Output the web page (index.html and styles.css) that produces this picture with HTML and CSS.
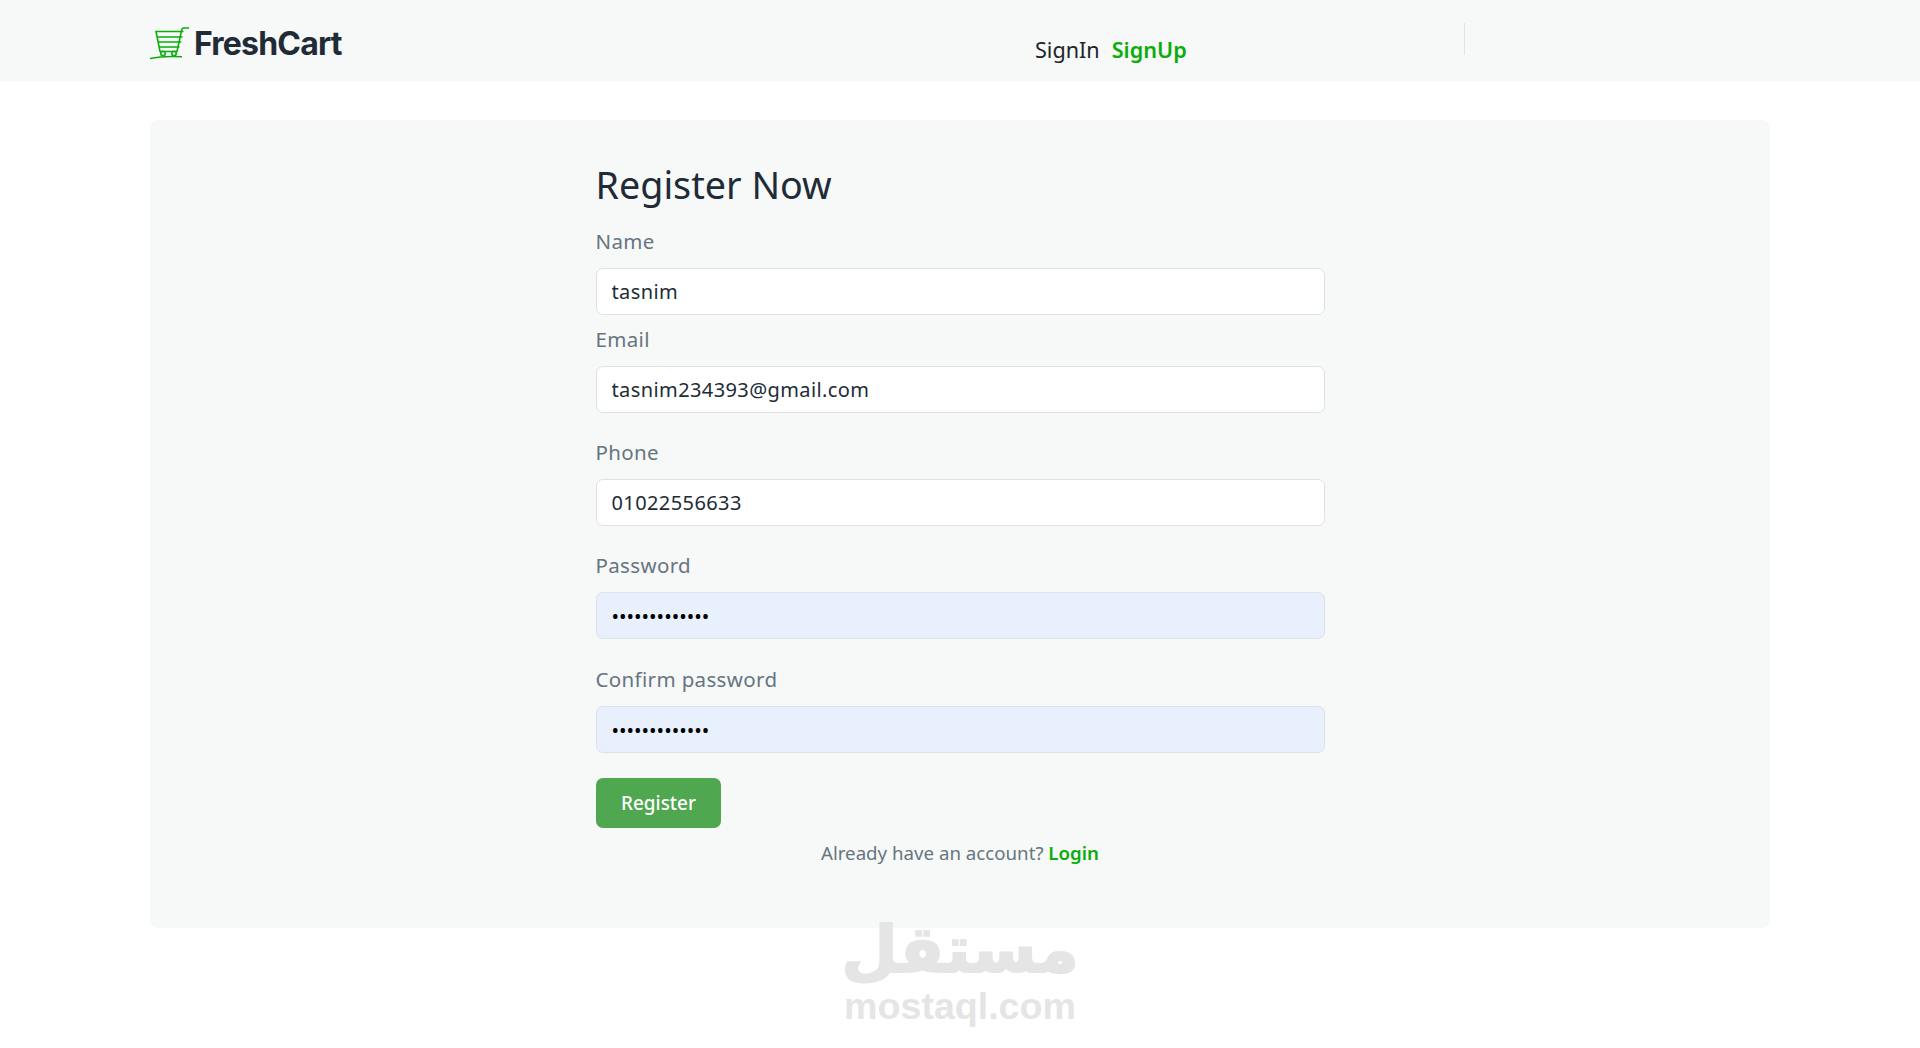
FILE: index.html
```html
<!DOCTYPE html>
<html lang="en">
<head>
<meta charset="utf-8">
<title>FreshCart</title>
<link rel="stylesheet" href="styles.css">
</head>
<body>
<header class="navbar">
  <a class="brand" href="#">
    <svg class="brand-icon" viewBox="0 0 40 34" width="40" height="34" fill="none" stroke="#0aad0a" stroke-width="1.6" aria-hidden="true">
      <path d="M39 2h-5.500c-1 0-1.400.5-1.700 1.400L27 25.500H10L6 5.500h27.500M7 11h25.500M8 16h23.200M9 21h20.500"/>
      <circle cx="13" cy="27.500" r="2.200"/>
      <circle cx="24" cy="27.500" r="2.200"/>
      <path d="M0 32.500c9-2 21-2.300 32-1.800" stroke-width="1.600"/>
    </svg>
    <span class="brand-name">FreshCart</span>
  </a>
  <nav class="nav-links">
    <a class="nav-link" href="#">SignIn</a>
    <a class="nav-link nav-link-active" href="#">SignUp</a>
  </nav>
  <span class="nav-divider"></span>
</header>
<main class="card">
  <form class="form">
    <h1 class="title">Register Now</h1>
    <div class="field field-name">
      <label class="label" for="name">Name</label>
      <input class="input" id="name" type="text" value="tasnim">
    </div>
    <div class="field field-email">
      <label class="label" for="email">Email</label>
      <input class="input" id="email" type="text" value="tasnim234393@gmail.com">
    </div>
    <div class="field">
      <label class="label" for="phone">Phone</label>
      <input class="input" id="phone" type="text" value="01022556633">
    </div>
    <div class="field">
      <label class="label" for="password">Password</label>
      <input class="input input-filled" id="password" type="password" value="Tasnim2343930">
    </div>
    <div class="field">
      <label class="label" for="confirm">Confirm password</label>
      <input class="input input-filled" id="confirm" type="password" value="Tasnim2343930">
    </div>
    <button class="button" type="button">Register</button>
    <p class="hint">Already have an account? <a class="hint-link" href="#">Login</a></p>
  </form>
</main>
<div class="watermark">
  <span class="watermark-ar" lang="ar" dir="rtl">مستقل</span>
  <span class="watermark-en">mostaql.com</span>
</div>
</body>
</html>
```
FILE: styles.css
```css
* { box-sizing: border-box; }
html, body { margin: 0; height: 1048px; overflow: hidden; }
body {
  position: relative;
  background: #fff;
  color: #212b36;
  font-family: "Noto Sans", "DejaVu Sans", sans-serif;
}
a { text-decoration: none; }

.navbar {
  display: flex;
  align-items: flex-start;
  height: 81px;
  padding: 0 150px;
  background: #f7f8f8;
}
.brand {
  display: flex;
  align-items: center;
  gap: 4px;
  height: 87px;
  width: 885px;
  color: #212b36;
}
.brand-icon { flex: none; margin-top: -1px; }
.brand-name {
  font-family: Inter, sans-serif;
  font-weight: 700;
  font-size: 32px;
  letter-spacing: -.8px;
}
.nav-links {
  display: flex;
  gap: 12px;
  padding-top: 36px;
  width: 429px;
}
.nav-link {
  font-size: 21.600px;
  line-height: 28px;
  color: #212529;
}
.nav-link-active { color: #0aad0a; font-weight: 600; }
.nav-divider {
  width: 1px;
  height: 32px;
  margin-top: 23px;
  background: #dde3e8;
}

.card {
  display: flex;
  justify-content: center;
  width: 1620px;
  height: 808px;
  margin: 39px auto 0;
  background: #f7f8f8;
  border-radius: 8px;
}
.form { width: 729px; padding-top: 39px; }
.title {
  margin: 0 0 16px;
  font-size: 37.700px;
  font-weight: 400;
  line-height: 52px;
  color: #212b36;
}
.field { margin-bottom: 25.200px; }
.field-name { margin-bottom: 0; }
.label {
  display: block;
  font-size: 20.500px;
  letter-spacing: .35px;
  line-height: 29px;
  margin-bottom: 12px;
  color: #66757f;
}
.field-email .label { margin-top: 10px; }
.input {
  display: block;
  width: 100%;
  height: 47px;
  padding: 0 15px;
  border: 1px solid #dee2e6;
  border-radius: 7px;
  background: #fff;
  color: #212b36;
  font: 400 20px "Noto Sans", sans-serif;
  letter-spacing: .4px;
  outline: none;
}
.input-filled { background: #e8f0fe; letter-spacing: 0; padding-top: 2px; color: #000; }
.button {
  display: block;
  width: 125px;
  height: 50px;
  margin: 1px 0 12px .5px;
  border: 0;
  border-radius: 7px;
  background: #4fa74f;
  color: #fff;
  font: 500 18.900px "Noto Sans", sans-serif;
}
.hint {
  margin: 0;
  text-align: center;
  font-size: 18.700px;
  line-height: 25px;
  color: #66757f;
}
.hint-link { color: #0aad0a; font-weight: 600; }

.watermark {
  position: absolute;
  left: 840px;
  top: 914px;
  width: 240px;
  display: flex;
  flex-direction: column;
  align-items: center;
  color: #e5e5e5;
  font-weight: 700;
}
.watermark-ar {
  font-family: "DejaVu Sans", sans-serif;
  font-size: 65px;
  line-height: 72px;
  -webkit-text-stroke: 2px #e5e5e5;
}
.watermark-en {
  font-family: "Liberation Sans", sans-serif;
  font-size: 37.600px;
  line-height: 40px;
}
```
